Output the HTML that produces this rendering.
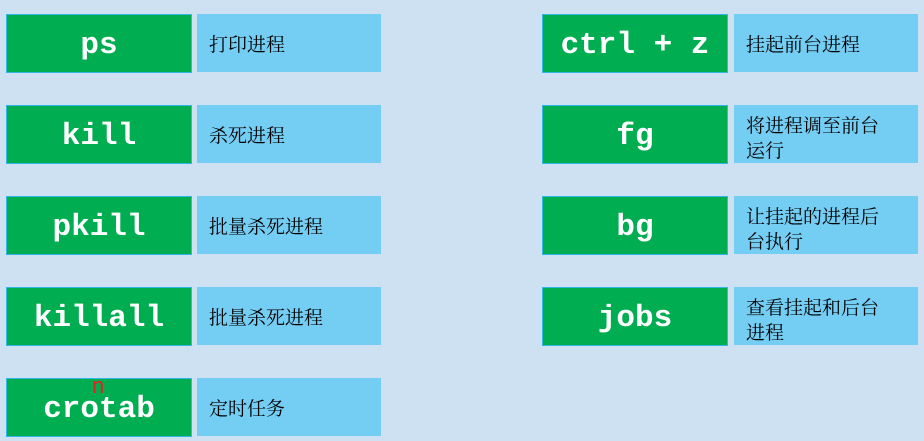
<!DOCTYPE html>
<html><head><meta charset="utf-8"><style>
body{margin:0;width:924px;height:441px;background:#cde1f2;position:relative;overflow:hidden}
.g{position:absolute;width:184px;background:#00ad50;border:1px solid #33b6e6;color:#fff;font:bold 31px "Liberation Mono",monospace;display:flex;align-items:center;justify-content:center;box-sizing:content-box;padding-top:3px;height:54px}
.b{position:absolute;width:184px;height:58px;background:#74cdf3;color:#000;font:19px "Liberation Serif","Noto Serif CJK SC",serif;display:flex;align-items:center;padding-left:12px;padding-top:5px;box-sizing:border-box;line-height:25px;white-space:nowrap}
.b2{padding-top:9px}
</style></head><body>
<div class="g" style="left:6px;top:14px">ps</div><div class="b" style="left:197px;top:14px">打印进程</div>
<div class="g" style="left:6px;top:105px">kill</div><div class="b" style="left:197px;top:105px">杀死进程</div>
<div class="g" style="left:6px;top:196px">pkill</div><div class="b" style="left:197px;top:196px">批量杀死进程</div>
<div class="g" style="left:6px;top:287px">killall</div><div class="b" style="left:197px;top:287px">批量杀死进程</div>
<div class="g" style="left:6px;top:378px">crotab</div><div class="b" style="left:197px;top:378px">定时任务</div>
<div style="position:absolute;left:92px;top:373px;color:#e8201c;font:22px 'Liberation Sans',sans-serif">n</div>
<div class="g" style="left:542px;top:14px">ctrl + z</div><div class="b" style="left:734px;top:14px">挂起前台进程</div>
<div class="g" style="left:542px;top:105px">fg</div><div class="b b2" style="left:734px;top:105px">将进程调至前台<br>运行</div>
<div class="g" style="left:542px;top:196px">bg</div><div class="b b2" style="left:734px;top:196px">让挂起的进程后<br>台执行</div>
<div class="g" style="left:542px;top:287px">jobs</div><div class="b b2" style="left:734px;top:287px">查看挂起和后台<br>进程</div>
</body></html>
